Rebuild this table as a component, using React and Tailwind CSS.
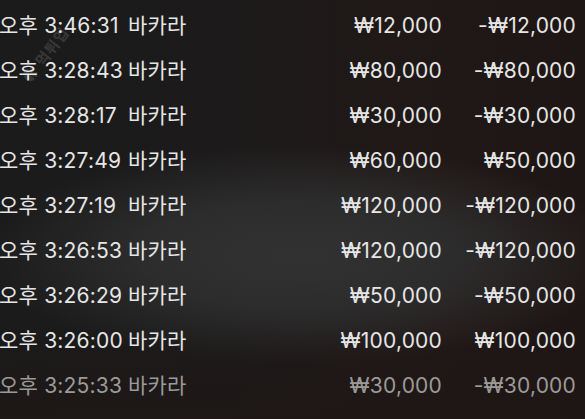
export default function App() {
  const rows = [
    { time: "3:46:31", bet: "₩12,000", result: "-₩12,000" },
    { time: "3:28:43", bet: "₩80,000", result: "-₩80,000" },
    { time: "3:28:17", bet: "₩30,000", result: "-₩30,000" },
    { time: "3:27:49", bet: "₩60,000", result: "₩50,000" },
    { time: "3:27:19", bet: "₩120,000", result: "-₩120,000" },
    { time: "3:26:53", bet: "₩120,000", result: "-₩120,000" },
    { time: "3:26:29", bet: "₩50,000", result: "-₩50,000" },
    { time: "3:26:00", bet: "₩100,000", result: "₩100,000" },
    { time: "3:25:33", bet: "₩30,000", result: "-₩30,000", faded: true },
  ];

  return (
    <div className="relative w-[585px] h-[419px] overflow-hidden bg-[#1d1a19] font-['Inter','Noto_Sans_CJK_KR',sans-serif]">
      {/* blurred backdrop */}
      <div className="absolute inset-0 bg-[linear-gradient(90deg,#1b1b1b_0%,#1c1a1a_40%,#201816_75%,#1e1614_100%)]" />
      <div className="absolute inset-0 bg-[radial-gradient(ellipse_320px_110px_at_300px_255px,rgba(50,50,50,1)_0%,rgba(46,46,46,0.9)_50%,rgba(40,36,35,0)_100%)]" />
      <div className="absolute inset-0 bg-[linear-gradient(180deg,rgba(30,22,20,0)_0%,rgba(30,22,20,0)_78%,rgba(30,22,20,0.7)_100%)]" />

      {/* watermark */}
      <div className="absolute left-[14px] top-[44px] -rotate-[52deg] text-[15px] font-bold tracking-[1px] text-white/15">
        ✿ 먹튀업
      </div>

      <div className="relative flex flex-col pt-[3px] pr-[9px]">
        {rows.map((r, i) => (
          <div
            key={i}
            className={`flex items-center h-[45px] text-[21px] tracking-[0.2px] ${r.faded ? "text-[#9c9a99]" : "text-[#e6e6e6]"}`}
          >
            <span className="w-[129px] -ml-[1px] whitespace-nowrap">오후 {r.time}</span>
            <span className="whitespace-nowrap">바카라</span>
            <span className="flex-1 text-right pr-[134px] whitespace-nowrap">{r.bet}</span>
            <span className="absolute right-[9px] whitespace-nowrap">{r.result}</span>
          </div>
        ))}
      </div>
    </div>
  );
}
